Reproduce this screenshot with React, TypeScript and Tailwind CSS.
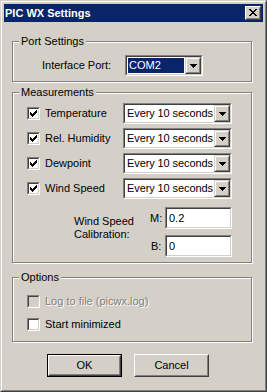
import React from "react";

const sunkenOuter =
  "border border-t-[#808080] border-l-[#808080] border-r-white border-b-white";
const sunkenInner =
  "border border-t-[#404040] border-l-[#404040] border-r-[#d4d0c8] border-b-[#d4d0c8]";

function DropButton() {
  return (
    <div className="h-full w-[16px] shrink-0 border border-t-[#d4d0c8] border-l-[#d4d0c8] border-r-[#404040] border-b-[#404040]">
      <div className="flex h-full w-full items-center justify-center border border-t-white border-l-white border-r-[#808080] border-b-[#808080] bg-[#d4d0c8]">
        <svg width="7" height="4" viewBox="0 0 7 4" shapeRendering="crispEdges">
          <path d="M0 0h7v1H0zM1 1h5v1H1zM2 2h3v1H2zM3 3h1v1H3z" fill="#000" />
        </svg>
      </div>
    </div>
  );
}

function Combo({ value, className, selected }: { value: string; className: string; selected?: boolean }) {
  return (
    <div className={`h-[21px] ${sunkenOuter} ${className}`}>
      <div className={`flex h-full ${sunkenInner} bg-white`}>
        <div className="flex min-w-0 flex-1 items-stretch overflow-hidden p-[1px]">
          {selected ? (
            <span className="flex flex-1 items-center whitespace-nowrap bg-[#0a246a] pl-[1px] text-white">{value}</span>
          ) : (
            <span className="flex flex-1 items-center whitespace-nowrap pl-[1px] tracking-[-0.1px]">{value}</span>
          )}
        </div>
        <DropButton />
      </div>
    </div>
  );
}

function Edit({ value }: { value: string }) {
  return (
    <div className={`h-[22px] w-[67px] ${sunkenOuter}`}>
      <div className={`flex h-full items-center ${sunkenInner} bg-white pl-[2px]`}>{value}</div>
    </div>
  );
}

function Check({ checked, disabled }: { checked?: boolean; disabled?: boolean }) {
  return (
    <div className={`h-[13px] w-[13px] shrink-0 ${sunkenOuter}`}>
      <div className={`h-full w-full ${sunkenInner} ${disabled ? "bg-[#d4d0c8]" : "bg-white"} p-[1px]`}>
        {checked && (
          <svg width="7" height="7" viewBox="0 0 7 7" shapeRendering="crispEdges">
            <path
              d="M6 0h1v1H6zM5 1h2v1H5zM0 2h1v1H0zM4 2h3v1H4zM0 3h2v1H0zM3 3h3v1H3zM0 4h5v1H0zM1 5h3v1H1zM2 6h1v1H2z"
              fill="#000"
            />
          </svg>
        )}
      </div>
    </div>
  );
}

function Group({ label, className, children }: { label: string; className: string; children?: React.ReactNode }) {
  return (
    <div className={`relative border border-[#808080] shadow-[inset_1px_1px_0_#fff,1px_1px_0_#fff] ${className}`}>
      <span className="absolute -top-[7px] left-[6px] bg-[#d4d0c8] px-[2px] leading-[13px]">{label}</span>
      {children}
    </div>
  );
}

function Button({ label, isDefault }: { label: string; isDefault?: boolean }) {
  const face = (
    <div className="flex h-full w-full items-center justify-center border border-t-white border-l-white border-r-[#404040] border-b-[#404040]">
      <div className="flex h-full w-full items-center justify-center border border-t-[#d4d0c8] border-l-[#d4d0c8] border-r-[#808080] border-b-[#808080]">
        {label}
      </div>
    </div>
  );
  if (isDefault) {
    return <div className="h-[23px] w-[75px] border border-black">{face}</div>;
  }
  return <div className="h-[23px] w-[75px]">{face}</div>;
}

const measurements = ["Temperature", "Rel. Humidity", "Dewpoint", "Wind Speed"];

export default function App() {
  return (
    <div className="h-[392px] w-[267px] border border-t-[#d4d0c8] border-l-[#d4d0c8] border-r-[#404040] border-b-[#404040] bg-[#d4d0c8] font-['Liberation_Sans',Arial,sans-serif] text-[11px] leading-[13px] text-black">
      <div className="flex h-full flex-col border border-t-white border-l-white border-r-[#808080] border-b-[#808080] p-[2px]">
        <div className="flex h-[18px] shrink-0 items-center justify-between bg-[#0a246a] pl-[1px] pr-[2px]">
          <span className="text-[11px] font-bold text-white">PIC WX Settings</span>
          <div className="h-[14px] w-[16px] border border-t-white border-l-white border-r-[#404040] border-b-[#404040]">
            <div className="flex h-full w-full items-center justify-center border border-t-[#d4d0c8] border-l-[#d4d0c8] border-r-[#808080] border-b-[#808080] bg-[#d4d0c8] pb-[1px] pr-[1px]">
              <svg width="8" height="7" viewBox="0 0 8 7" shapeRendering="crispEdges">
                <path
                  d="M0 0h2v1H0zM6 0h2v1H6zM1 1h2v1H1zM5 1h2v1H5zM2 2h4v1H2zM3 3h2v1H3zM2 4h4v1H2zM1 5h2v1H1zM5 5h2v1H5zM0 6h2v1H0zM6 6h2v1H6z"
                  fill="#000"
                />
              </svg>
            </div>
          </div>
        </div>

        <div className="flex flex-col pl-[8px]">
          <Group label="Port Settings" className="mt-[19px] h-[41px] w-[240px]">
            <div className="flex items-center pl-[29px] pt-[13px]">
              <span className="w-[83px]">Interface Port:</span>
              <Combo value="COM2" className="w-[78px]" selected />
            </div>
          </Group>

          <Group label="Measurements" className="mt-[10px] h-[171px] w-[240px]">
            <div className="flex flex-col gap-[4px] pt-[10px]">
              {measurements.map((m) => (
                <div key={m} className="flex h-[21px] items-center pl-[14px]">
                  <div className="flex w-[96px] items-center">
                    <Check checked />
                    <span className="ml-[5px]">{m}</span>
                  </div>
                  <Combo value="Every 10 seconds" className="w-[109px]" />
                </div>
              ))}
            </div>
            <div className="mt-[8px] flex pl-[61px]">
              <div className="w-[76px] pt-[8px]">
                Wind Speed
                <br />
                Calibration:
              </div>
              <div className="flex flex-col gap-[6px]">
                <div className="flex items-center">
                  <span className="w-[15px]">M:</span>
                  <Edit value="0.2" />
                </div>
                <div className="flex items-center">
                  <span className="w-[15px] pl-[1px]">B:</span>
                  <Edit value="0" />
                </div>
              </div>
            </div>
          </Group>

          <Group label="Options" className="mt-[14px] h-[65px] w-[240px]">
            <div className="flex flex-col gap-[6px] pl-[14px] pt-[15px]">
              <div className="flex h-[17px] items-center">
                <Check disabled />
                <span className="ml-[5px] text-[#808080] [text-shadow:1px_1px_0_#fff]">Log to file (picwx.log)</span>
              </div>
              <div className="flex h-[17px] items-center">
                <Check />
                <span className="ml-[5px]">Start minimized</span>
              </div>
            </div>
          </Group>

          <div className="mt-[12px] flex gap-[12px] pl-[35px]">
            <Button label="OK" isDefault />
            <Button label="Cancel" />
          </div>
        </div>
      </div>
    </div>
  );
}
